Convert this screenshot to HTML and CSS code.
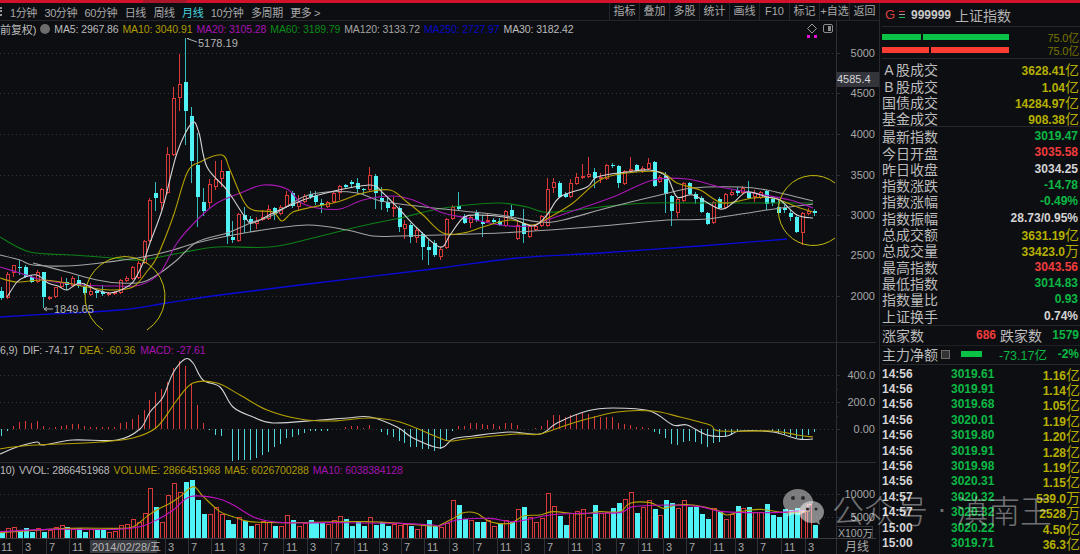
FILE: index.html
```html
<!DOCTYPE html>
<html lang="zh-CN">
<head>
<meta charset="utf-8">
<title>上证指数 月线</title>
<link rel="stylesheet" href="styles.css">
</head>
<body>
<div class="topbar"></div>
<div class="app">
  <main class="left">
    <nav class="toolbar">
      <span class="grip"></span>
      <div class="tabs">
        <span class="tab t1">1分钟</span><span class="tab">30分钟</span><span class="tab">60分钟</span><span class="tab">日线</span><span class="tab">周线</span><span class="tab active">月线</span><span class="tab">10分钟</span><span class="tab">多周期</span><span class="tab">更多 &gt;</span>
      </div>
      <div class="tools">
        <span class="tool">指标</span><span class="tool">叠加</span><span class="tool">多股</span><span class="tool">统计</span><span class="tool">画线</span><span class="tool">F10</span><span class="tool">标记</span><span class="tool">+自选</span><span class="tool">返回</span>
      </div>
    </nav>

    <section class="pane pane-main">
      <svg class="chart" width="879" height="322" viewBox="0 21 879 322">
        <g class="grid">
          <path d="M0 53H836M0 93H836M0 134H836M0 175H836M0 215H836M0 255H836M0 296H836"/>
        </g>
        <path class="axis" d="M836.5 21V343M836 53h4M836 93h4M836 134h4M836 175h4M836 215h4M836 255h4M836 296h4"/>
        <g id="candles"></g>
        <g id="maLines"></g>
        <path class="ring" d="M103 330A40 40 0 1 1 147 330"/>
        <path class="ring" d="M835 183A35 35 0 1 0 835 238"/>
        <path class="pointer" d="M187 38.5h2M187 38.5l10 3.5"/>
        <path class="pointer" d="M44 309h9M44 309l3-2M44 309l3 2"/>
        <text class="lbl" x="198" y="47">5178.19</text>
        <text class="lbl" x="54" y="313">1849.65</text>
        <path class="diamond" d="M812 24l4.500 4.500-4.500 4.500-4.500-4.500z"/>
        <rect class="dot" x="807" y="35" width="3" height="3"/>
        <rect class="dot" x="814" y="35" width="3" height="3"/>
        <rect class="sideicon" x="823.500" y="24.500" width="9" height="8" rx="1.500"/>
        <rect class="sidefill" x="828" y="26" width="3" height="5"/>
        <g class="ylabels">
          <text x="875" y="57">5000</text>
          <text x="875" y="97">4500</text>
          <text x="875" y="138">4000</text>
          <text x="875" y="179">3500</text>
          <text x="875" y="219">3000</text>
          <text x="875" y="259">2500</text>
          <text x="875" y="300">2000</text>
        </g>
        <rect class="pricebox" x="836" y="72" width="43" height="15"/>
        <text class="pricetext" x="837" y="83">4585.4</text>
      </svg>
      <div class="legend legend-main">
        <span class="c-g1 qfq">前复权)</span><span class="roundicon"></span>
        <span class="c-g1">MA5: 2967.86</span><span class="c-ol">MA10: 3040.91</span><span class="c-mg">MA20: 3105.28</span><span class="c-gn">MA60: 3189.79</span><span class="c-g2">MA120: 3133.72</span><span class="c-bl">MA250: 2727.97</span><span class="c-g1">MA30: 3182.42</span>
      </div>
    </section>

    <section class="pane pane-macd">
      <svg class="chart" width="876" height="120" viewBox="0 343 876 120">
        <g class="grid"><path d="M0 375H836M0 402H836M0 429H836"/></g>
        <path class="axis" d="M836.5 343V463M836 375h4M836 389h2M836 402h4M836 416h2M836 429h4"/>
        <g id="macd"></g>
        <g class="ylabels">
          <text x="875" y="379">400.0</text>
          <text x="875" y="406">200.0</text>
          <text x="875" y="433">0.00</text>
        </g>
      </svg>
      <div class="legend legend-macd">
        <span class="c-g1">6,9)</span><span class="c-g1">DIF: -74.17</span><span class="c-ol">DEA: -60.36</span><span class="c-mg">MACD: -27.61</span>
      </div>
    </section>

    <section class="pane pane-vol">
      <svg class="chart" width="876" height="76" viewBox="0 463 876 76">
        <g class="grid"><path d="M0 494H836M0 517H836"/></g>
        <path class="axis" d="M836.5 463V539M836 494h4M836 517h4"/>
        <g id="vol"></g>
        <g class="ylabels">
          <text x="875" y="498">10000</text>
          <text x="875" y="521">5000</text>
        </g>
        <rect class="unitbox" x="836.500" y="526.500" width="36" height="12"/>
        <text class="unit" x="838" y="537">X100万</text>
      </svg>
      <div class="legend legend-vol">
        <span class="c-g1">10)</span><span class="c-g1">VVOL: 2866451968</span><span class="c-ol">VOLUME: 2866451968</span><span class="c-ol">MA5: 6026700288</span><span class="c-mg">MA10: 6038384128</span>
      </div>
    </section>

    <svg class="chart xaxis" width="876" height="15" viewBox="0 539 876 15">
      <path class="axis" d="M836.5 539V554"/>
      <g id="xticks"></g>
      <rect class="datebox" x="90" y="540" width="67" height="13"/>
      <text class="lbl" x="92" y="551">2014/02/28/五</text>
      <text class="month" x="845" y="551">月线</text>
    </svg>
  </main>

  <aside class="panel">
    <header class="phead">
      <span class="g">G</span>
      <span class="menu"><i class="m-r"></i><i class="m-g"></i><i class="m-n"></i></span>
      <b class="code">999999</b>
      <span class="name">上证指数</span>
    </header>
    <div class="meters">
      <div class="meter"><i class="seg green s39"></i><i class="seg green s87"></i><span class="mval">75.0亿</span></div>
      <div class="meter"><i class="seg red s47"></i><i class="seg red s78"></i><span class="mval">75.0亿</span></div>
    </div>
    <div class="sec sec-a">
      <div class="row"><span><i class="wide">A</i>股成交</span><b class="ol">3628.41<em>亿</em></b></div>
      <div class="row"><span><i class="wide">B</i>股成交</span><b class="ol">1.04<em>亿</em></b></div>
      <div class="row"><span>国债成交</span><b class="ol">14284.97<em>亿</em></b></div>
      <div class="row"><span>基金成交</span><b class="ol">908.38<em>亿</em></b></div>
    </div>
    <div class="sec sec-b">
      <div class="row"><span>最新指数</span><b class="gn">3019.47</b></div>
      <div class="row"><span>今日开盘</span><b class="rd">3035.58</b></div>
      <div class="row"><span>昨日收盘</span><b class="wh">3034.25</b></div>
      <div class="row"><span>指数涨跌</span><b class="gn">-14.78</b></div>
      <div class="row"><span>指数涨幅</span><b class="gn">-0.49%</b></div>
      <div class="row"><span>指数振幅</span><b class="wh">28.73/0.95%</b></div>
      <div class="row"><span>总成交额</span><b class="ol">3631.19<em>亿</em></b></div>
      <div class="row"><span>总成交量</span><b class="ol">33423.0<em>万</em></b></div>
      <div class="row"><span>最高指数</span><b class="rd">3043.56</b></div>
      <div class="row"><span>最低指数</span><b class="gn">3014.83</b></div>
      <div class="row"><span>指数量比</span><b class="gn">0.93</b></div>
      <div class="row"><span>上证换手</span><b class="wh">0.74%</b></div>
    </div>
    <div class="updown">
      <span>涨家数</span><b class="rd n686">686</b><span class="lab2">跌家数</span><b class="gn n1579">1579</b>
    </div>
    <div class="flow">
      <span>主力净额</span><span class="docicon"></span><i class="flowbar"></i><span class="gn flowval">-73.17亿</span><span class="gn flowpct">-2%</span>
    </div>
    <div class="ticks">
      <div class="tick"><b class="tm">14:56</b><b class="pr">3019.61</b><b class="ol amt">1.16<em>亿</em></b></div>
      <div class="tick"><b class="tm">14:56</b><b class="pr">3019.91</b><b class="ol amt">1.14<em>亿</em></b></div>
      <div class="tick"><b class="tm">14:56</b><b class="pr">3019.68</b><b class="ol amt">1.05<em>亿</em></b></div>
      <div class="tick"><b class="tm">14:56</b><b class="pr">3020.01</b><b class="ol amt">1.19<em>亿</em></b></div>
      <div class="tick"><b class="tm">14:56</b><b class="pr">3019.80</b><b class="ol amt">1.20<em>亿</em></b></div>
      <div class="tick"><b class="tm">14:56</b><b class="pr">3019.91</b><b class="ol amt">1.28<em>亿</em></b></div>
      <div class="tick"><b class="tm">14:56</b><b class="pr">3019.98</b><b class="ol amt">1.19<em>亿</em></b></div>
      <div class="tick"><b class="tm">14:56</b><b class="pr">3020.31</b><b class="ol amt">1.15<em>亿</em></b></div>
      <div class="tick"><b class="tm">14:57</b><b class="pr">3020.32</b><b class="ol amt">539.0<em>万</em></b></div>
      <div class="tick"><b class="tm">14:57</b><b class="pr">3020.32</b><b class="ol amt">2528<em>万</em></b></div>
      <div class="tick"><b class="tm">15:00</b><b class="pr">3020.22</b><b class="ol amt">4.50<em>亿</em></b></div>
      <div class="tick"><b class="tm">15:00</b><b class="pr">3019.71</b><b class="ol amt">36.3<em>亿</em></b></div>
    </div>
  </aside>
</div>

<div class="watermark">
  <svg class="wechat" width="44" height="44" viewBox="0 0 44 44">
    <path class="bub1" d="M17 2C8.700 2 2 7.800 2 15c0 4 2.100 7.600 5.400 10L6 30l5.200-2.900c1.800.600 3.800.900 5.800.900 1 0 1.700-.100 2.500-.200C22 27 34 17 32 13 30 6.800 24.200 2 17 2z"/>
    <circle class="eye" cx="12" cy="11" r="2"/><circle class="eye" cx="22" cy="11" r="2"/>
    <path class="bub2" d="M31 14c-7 0-13 5-13 11s6 11 13 11c1.500 0 3-.200 4.300-.600L39 38l-.900-4.200C41 31.800 43 28.600 43 25c0-6-5.500-11-12-11z"/>
    <circle class="eye" cx="26.500" cy="22" r="1.600"/><circle class="eye" cx="35" cy="22" r="1.600"/>
  </svg>
  <span class="wmtext">公众号</span><span class="wmdot">·</span><span class="wmtext wmname">滇南王</span>
</div>
<script src="chart.js"></script>
</body>
</html>
```
FILE: styles.css
```css
* { box-sizing: border-box; }
html, body { margin: 0; padding: 0; }
body {
  width: 1080px; height: 554px; overflow: hidden; position: relative;
  background: #0d0e12; color: #b4b4b4;
  font-family: "Liberation Sans", "Noto Sans CJK SC", sans-serif;
}
.topbar { height: 3px; background: linear-gradient(90deg, #d2122a 143px, #a9162a 143px, #a9162a 187px, #d2122a 187px); }
.app { display: flex; height: 551px; }
.left { width: 880px; flex: none; display: flex; flex-direction: column; border-right: 1px solid #26282d; }

.toolbar { height: 18px; display: flex; align-items: center; border-bottom: 1px solid #24262b; font-size: 11px; color: #a8a8a8; }
.grip { width: 2px; height: 9px; margin-right: 8px; border-left: 2px dotted #999; }
.tabs { display: flex; gap: 7.500px; letter-spacing: -.4px; }
.tab { white-space: nowrap; }
.active { color: #45d4de; }
.tools { margin-left: auto; display: flex; width: 270px; }
.tool { width: 30px; height: 17px; line-height: 17px; text-align: center; border-left: 1px solid #24262b; white-space: nowrap; }

.pane { position: relative; flex: none; }
.pane-main { height: 322px; }
.pane-macd { height: 120px; }
.pane-vol { height: 76px; }
.chart { display: block; }
.xaxis { flex: none; }
.pane::after { content: ""; position: absolute; left: 0; width: 876px; bottom: 0; height: 1px; background: #2a2c32; }
.pane-vol::after { background: #3a3c42; }

.grid path { fill: none; stroke: #34353b; stroke-width: 1; stroke-dasharray: 1 3; shape-rendering: crispEdges; }
.axis { fill: none; stroke: #2e3036; stroke-width: 1; shape-rendering: crispEdges; }
.ring { fill: none; stroke: #c4bc0a; stroke-width: 1; }
.pointer { fill: none; stroke: #b0b0b0; stroke-width: 1; }
.lbl { font-size: 11px; fill: #b4b4b4; font-family: "Liberation Sans", "Noto Sans CJK SC", sans-serif; }
.ylabels text { font-size: 11px; fill: #a6a6a6; text-anchor: end; font-family: "Liberation Sans", sans-serif; }
.pricebox { fill: #34353c; }
.pricetext { font-size: 11px; fill: #d6d6d6; font-family: "Liberation Sans", sans-serif; }
.diamond { fill: none; stroke: #9a9a9a; }
.dot { fill: #e010d8; }
.sideicon { fill: none; stroke: #8c8c8c; }
.sidefill { fill: #8c8c8c; }
.unitbox { fill: none; stroke: #33353a; }
.unit { font-size: 10.500px; fill: #a6a6a6; font-family: "Liberation Sans", "Noto Sans CJK SC", sans-serif; }
.datebox { fill: #3a3b41; }
.month { font-size: 12px; fill: #a6a6a6; font-family: "Noto Sans CJK SC", sans-serif; }
.xt { font-size: 11px; fill: #a6a6a6; font-family: "Liberation Sans", sans-serif; }
.xl { stroke: #303238; stroke-width: 1; shape-rendering: crispEdges; }

.up { fill: #0d0e12; stroke: #d83a3a; stroke-width: 1; shape-rendering: crispEdges; }
.dn { fill: #4ff3f6; shape-rendering: crispEdges; }
.wr { stroke: #d83a3a; stroke-width: 1; fill: none; shape-rendering: crispEdges; }
.wc { stroke: #37b9c0; stroke-width: 1; fill: none; shape-rendering: crispEdges; }
.hc { stroke: #52d6de; stroke-width: 1; fill: none; shape-rendering: crispEdges; }
.ma { fill: none; stroke-width: 1.100; stroke-linejoin: round; }
.s-w { stroke: #d4d4d4; }
.s-g { stroke: #a4a4a4; }
.s-o { stroke: #b5a000; }
.s-m { stroke: #a818b4; }
.s-v { stroke: #0d7f18; }
.s-b { stroke: #0a0ad8; stroke-width: 1.300; }
.s-mv { stroke: #c010c0; }

.legend { position: absolute; left: 0; display: flex; gap: 4px; font-size: 10.500px; white-space: nowrap; letter-spacing: -.1px; align-items: center; }
.legend-main { top: 1px; height: 14px; }
.legend-macd { top: 0; height: 13px; gap: 5px; }
.legend-vol { top: 0; height: 13px; }
.qfq { font-size: 11px; }
.roundicon { width: 10px; height: 10px; border-radius: 50%; background: #6c6c6c; margin-right: 0; flex: none; }
.c-g1 { color: #bcbcbc; }
.c-g2 { color: #a4a4a4; }
.c-ol { color: #ad9a00; }
.c-mg { color: #a412b0; }
.c-gn { color: #0a8a16; }
.c-bl { color: #0808c4; }

.panel { flex: 1; min-width: 0; font-size: 14px; color: #bcbcbc; padding-left: 2px; }
.phead { height: 24px; display: flex; align-items: center; padding-left: 3px; border-bottom: 1px solid #26282d; }
.g { color: #d8403e; font-size: 13px; width: 14px; }
.menu { width: 12px; display: flex; flex-direction: column; gap: 2px; }
.menu i { display: block; width: 6px; height: 1px; }
.m-r { background: #d83a3a; }
.m-g { background: #a0a0a0; }
.m-n { background: #18c050; }
.code { font-size: 12px; color: #c8c8c8; width: 44px; }
.name { font-size: 14px; color: #b4b4b4; }
.meters { height: 32px; border-bottom: 1px solid #26282d; padding-top: 6px; display: flex; flex-direction: column; gap: 6px; }
.meter { display: flex; height: 7px; align-items: center; gap: 2px; position: relative; }
.seg { display: block; height: 6px; }
.green { background: #0ac246; }
.red { background: #fa3c32; }
.s39 { width: 39px; }
.s87 { width: 86px; }
.s47 { width: 47px; }
.s78 { width: 78px; }
.mval { margin-left: auto; font-size: 11px; color: #7a7600; padding-right: 1px; text-align: right; white-space: nowrap; letter-spacing: -.2px; }
.sec { border-bottom: 1px solid #26282d; }
.sec-a { height: 68px; padding-top: 2px; }
.sec-b { height: 199px; padding-top: 1px; }
.row { height: 16.330px; display: flex; justify-content: space-between; align-items: center; padding-right: 2px; white-space: nowrap; }
.wide { display: inline-block; width: 14px; text-align: center; font-style: normal; }
b { font-weight: bold; font-size: 12px; }
em { font-style: normal; font-weight: normal; font-size: 14px; letter-spacing: -1px; }
.ol { color: #b5b000; }
.gn { color: #0bb844; }
.rd { color: #f03c3c; }
.wh { color: #d4d4d4; }
.updown { height: 20px; display: flex; align-items: center; border-bottom: 1px solid #1e2024; padding-bottom: 2px; }
.n686 { width: 36px; margin-left: 36px; text-align: right; }
.lab2 { margin-left: 4px; }
.n1579 { margin-left: auto; padding-right: 1px; }
.flow { height: 19px; display: flex; align-items: center; border-bottom: 1px solid #26282d; white-space: nowrap; padding-bottom: 2px; }
.docicon { width: 9px; height: 9px; border: 1px solid #6c6c6c; background: #333; margin-left: 3px; flex: none; }
.flowbar { width: 21px; height: 6px; background: #0ac246; margin-left: 11px; flex: none; }
.flowval { margin-left: 17px; font-size: 12.500px; }
.flowpct { margin-left: auto; font-size: 12px; font-weight: bold; padding-right: 1px; }
.ticks { padding-top: 1px; }
.tick { height: 15.400px; display: flex; align-items: center; }
.tm { width: 69px; color: #d4d4d4; }
.pr { width: 44px; color: #0bb844; }
.amt { margin-left: auto; padding-right: 1px; white-space: nowrap; }

.watermark { position: absolute; left: 781px; top: 486px; display: flex; align-items: center; pointer-events: none; }
.wechat { flex: none; margin-right: 7px; }
.bub1 { fill: rgba(255,255,255,.46); }
.bub2 { fill: rgba(255,255,255,.5); }
.eye { fill: #2a2a2a; }
.wmtext { font-size: 32px; font-weight: 300; color: rgba(255,255,255,.42); font-family: "Noto Sans CJK SC", sans-serif; white-space: nowrap; }
.wmdot { width: 28px; text-align: center; font-size: 28px; color: rgba(255,255,255,.42); font-family: "Liberation Sans", sans-serif; }
```
FILE: chart.js
```js
(function () {
  var NS = 'http://www.w3.org/2000/svg';
  function X(i) { return Math.round(2.2 + 5.93 * i) - 2; }

  // kind, body top, body bottom, wick high, wick low
  var candles = [
    ['c',291,298,287,300],['r',274,298,272,299],['r',265,273,265,277],['c',267,268,260,275],['c',267,277,265,278],
    ['c',277,282,275,283],['r',272,282,270,283],['c',272,297,272,308],['r',297,299,296,300],['r',287,297,287,298],
    ['r',282,287,277,288],['c',282,285,278,290],['r',278,286,276,287],['c',280,286,276,288],['c',287,293,283,295],
    ['r',291,295,283,296],['c',291,293,290,298],['c',292,294,285,296],['r',293,295,292,296],['r',292,294,291,295],
    ['r',280,293,279,294],['r',278,281,276,282],['r',267,279,266,280],['r',263,278,261,279],['r',241,263,240,264],
    ['r',200,241,198,242],['c',193,198,182,211],['r',189,203,188,210],['r',154,193,147,194],['r',98,155,87,156],
    ['r',84,98,54,111],['c',82,111,38,145],['c',116,161,107,183],['c',165,197,133,227],['c',202,211,188,216],
    ['r',184,203,179,208],['r',179,187,161,190],['r',171,179,160,187],['c',171,236,171,244],['c',237,240,221,243],
    ['r',214,241,213,242],['c',215,220,207,233],['c',219,222,216,232],['r',221,224,217,229],['r',217,220,210,221],
    ['r',209,219,205,220],['c',208,214,207,220],['r',207,214,205,215],['r',195,207,191,208],['c',193,206,191,208],
    ['r',202,207,195,211],['r',196,202,194,203],['c',194,197,191,199],['c',196,202,191,205],['c',203,205,199,213],
    ['r',202,207,201,208],['r',193,202,192,203],['r',186,193,185,200],['c',185,187,184,188],['c',182,184,180,187],
    ['c',183,189,178,193],['c',189,190,188,195],['r',175,190,167,191],['c',176,193,174,209],['c',198,202,187,210],
    ['c',202,208,198,212],['r',207,209,197,217],['c',208,227,206,232],['r',224,229,220,239],['c',225,237,223,243],
    ['r',230,238,227,243],['c',234,247,232,260],['c',247,250,240,265],['c',243,255,240,257],['r',249,257,247,260],
    ['r',219,248,218,249],['r',207,219,205,220],['c',206,209,192,210],['c',216,223,214,224],['r',217,223,216,228],
    ['c',213,220,210,222],['c',222,224,215,237],['r',220,222,214,223],['c',220,222,218,224],['c',221,225,218,226],
    ['r',211,226,210,227],['c',210,216,205,218],['r',225,239,220,240],['c',223,234,209,243],['r',226,237,225,238],
    ['r',226,230,225,231],['r',216,226,215,227],['r',189,226,178,227],['r',182,188,178,193],['c',183,197,181,198],
    ['c',194,197,192,198],['r',183,197,179,198],['r',177,184,173,185],['r',176,177,164,179],['r',174,177,157,178],
    ['c',172,178,168,188],['r',177,178,173,183],['r',165,179,164,180],['c',165,166,163,168],['c',166,183,165,188],
    ['r',171,184,170,185],['r',169,171,157,172],['c',165,171,164,172],['r',168,172,166,173],['r',163,169,158,170],
    ['c',162,186,161,187],['r',177,182,175,183],['c',176,194,172,213],['c',196,211,195,226],['r',199,213,198,218],
    ['r',183,201,182,202],['c',183,194,182,195],['c',194,199,192,204],['c',198,212,196,213],['c',213,224,212,225],
    ['r',202,223,201,224],['c',199,208,197,209],['r',194,208,193,209],['r',192,195,190,196],['c',190,193,187,196],
    ['r',188,193,186,194],['c',192,198,181,199],['r',193,197,190,202],['r',192,198,191,199],['c',191,204,190,210],
    ['c',199,203,197,206],['c',207,213,199,214],['c',208,210,205,213],['c',213,217,210,221],['c',217,232,216,233],
    ['r',213,233,212,245],['r',211,214,208,215],['c',211,213,209,216]
  ];

  // y3 = (y - 340) * 3 readings of the MACD histogram tops/bottoms
  var macd = [288,272,258,245,244,250,244,258,265,262,258,255,252,252,257,260,261,262,262,262,250,246,236,225,210,180,157,148,125,85,62,77,130,195,250,270,285,288,268,362,360,360,360,355,345,335,322,312,295,290,285,278,272,274,272,272,268,266,260,257,258,264,255,268,276,284,292,303,310,322,320,326,328,332,326,300,272,258,258,250,250,252,254,252,258,250,250,255,266,266,263,258,240,224,224,230,225,222,218,222,228,232,232,232,250,252,255,260,262,263,276,282,293,312,314,305,303,305,312,322,310,305,290,285,276,268,267,267,267,268,274,280,284,288,295,300,284,275];

  var volR = '1,2,6,8,9,10,12,15,18,19,20,21,22,23,24,25,27,28,29,30,35,36,37,40,43,44,45,47,48,50,51,55,56,57,62,66,67,68,70,71,74,75,76,79,82,83,85,87,89,90,91,92,93,96,97,98,99,101,102,105,106,108,109,111,114,115,120,122,123,125,127,128,135,136'.split(',').reduce(function (m, v) { m[+v] = 1; return m; }, {});
  var vol = [575,565,560,570,565,575,565,575,570,562,555,560,565,565,575,568,568,568,575,572,555,552,538,545,518,445,502,547,465,428,455,425,420,480,523,523,500,523,540,553,530,543,557,552,543,545,557,557,525,540,558,548,540,545,548,552,540,528,538,558,545,557,530,555,547,558,553,555,553,558,568,555,540,558,560,550,480,495,537,540,546,546,540,558,553,540,545,508,502,532,546,535,460,498,528,555,520,512,508,530,495,520,515,505,490,478,455,520,500,480,508,525,480,490,505,480,500,502,522,538,503,515,538,522,498,505,500,515,515,493,525,530,508,510,503,515,492,555];

  var lines = {
    w: [[7,297],[17,282],[25,277],[37,275],[48,283],[58,286],[67,290],[80,283],[97,290],[110,293],[123,289],[133,282],[143,263],[150,243],[163,207],[177,153],[192,123],[199,133],[207,167],[227,190],[245,217],[253,223],[273,213],[303,200],[330,192],[370,185],[383,193],[400,210],[417,228],[440,247],[450,235],[463,218],[477,215],[510,218],[533,226],[547,215],[560,197],[587,187],[597,177],[627,172],[650,170],[667,177],[677,197],[693,195],[720,209],[733,203],[747,192],[767,197],[780,200],[797,215],[813,218]],
    o: [[0,278],[17,282],[43,280],[67,283],[87,287],[110,290],[133,287],[148,270],[157,257],[173,217],[187,173],[200,162],[222,155],[230,170],[243,200],[253,210],[273,212],[282,221],[293,212],[313,207],[337,202],[363,193],[390,190],[407,202],[423,215],[443,233],[463,233],[483,227],[510,220],[533,225],[550,217],[573,203],[600,180],[627,173],[660,172],[677,183],[700,190],[723,203],[753,198],[773,198],[800,208],[813,212]],
    m: [[0,267],[20,273],[43,280],[83,285],[117,286],[140,285],[160,273],[177,243],[197,220],[217,203],[243,192],[263,185],[287,189],[300,202],[317,208],[340,209],[363,200],[393,196],[413,200],[443,213],[467,218],[500,225],[530,226],[547,220],[570,212],[613,197],[653,180],[687,179],[720,187],[753,193],[790,200],[813,208]],
    v: [[0,237],[30,252],[73,255],[113,258],[140,260],[180,253],[217,247],[270,247],[313,238],[357,227],[400,218],[433,210],[467,205],[500,203],[527,207],[543,212],[567,211],[600,207],[647,203],[700,203],[750,203],[813,203]],
    g: [[0,255],[20,260],[33,265],[67,266],[100,263],[143,257],[173,250],[200,242],[250,232],[307,225],[347,230],[373,236],[400,236],[440,235],[500,233],[550,230],[613,225],[667,220],[707,219],[767,210],[813,204]],
    g2: [[33,263],[67,272],[97,280],[120,283],[143,282],[160,273],[177,260],[197,242],[227,233],[253,222],[273,215],[303,197],[327,192],[357,193],[377,200],[400,204],[443,209],[500,215],[540,222],[563,220],[607,208],[660,195],[693,188],[740,187],[767,190],[813,201]],
    b: [[0,317],[50,314],[120,310],[167,303],[220,295],[300,285],[433,269],[517,258],[600,253],[700,246],[787,239]]
  };
  var dif = [[0,454],[17,447],[37,442],[43,445],[73,440],[117,440],[140,429],[150,412],[163,397],[173,373],[185,359],[193,363],[203,380],[220,387],[233,407],[253,417],[273,423],[320,420],[347,418],[370,417],[397,427],[413,438],[440,448],[453,439],[473,436],[510,432],[540,434],[557,423],[587,411],[613,408],[650,411],[673,425],[687,425],[707,435],[727,436],[740,431],[773,432],[798,439],[813,439]];
  var dea = [[0,449],[13,447],[37,445],[100,442],[133,438],[157,427],[177,400],[193,383],[217,383],[240,395],[267,410],[300,419],[333,421],[370,418],[400,422],[437,437],[450,441],[473,438],[517,434],[540,434],[573,423],[617,412],[653,411],[680,417],[710,425],[720,431],[773,431],[797,435],[813,437]];

  function v3(pts, off) { return pts.map(function (p) { return [p[0] / 3 + off, 340 + p[1] / 3]; }); }
  var volMa5 = v3([[0,578],[200,565],[350,565],[400,560],[440,530],[470,510],[510,490],[540,470],[580,440],[610,470],[660,515],[700,530],[750,545],[850,548],[1100,545],[1300,558]], 0)
    .concat(v3([[0,555],[40,535],[70,518],[110,520],[150,545],[210,550],[250,528],[300,525],[340,515],[420,522],[480,515],[540,515],[570,490],[630,488],[670,505],[710,495],[760,495],[830,510],[860,525],[900,515],[960,508],[1040,518],[1110,512]], 440));
  var volMa10 = v3([[0,575],[150,568],[350,568],[420,560],[470,540],[520,510],[570,470],[650,475],[700,495],[770,535],[850,548],[1000,548],[1200,550],[1300,555]], 0)
    .concat(v3([[0,558],[50,540],[150,535],[220,545],[330,525],[420,520],[540,518],[580,500],[700,495],[780,500],[850,515],[1000,518],[1110,510]], 440));

  function smooth(p) {
    var d = 'M' + p[0][0] + ' ' + p[0][1];
    for (var i = 0; i < p.length - 1; i++) {
      var a = p[i - 1] || p[i], b = p[i], c = p[i + 1], e = p[i + 2] || c;
      d += 'C' + (b[0] + (c[0] - a[0]) / 6).toFixed(1) + ' ' + (b[1] + (c[1] - a[1]) / 6).toFixed(1) + ' ' +
        (c[0] - (e[0] - b[0]) / 6).toFixed(1) + ' ' + (c[1] - (e[1] - b[1]) / 6).toFixed(1) + ' ' + c[0] + ' ' + c[1];
    }
    return d;
  }
  function el(parent, tag, attrs, text) {
    var n = document.createElementNS(NS, tag);
    for (var k in attrs) n.setAttribute(k, attrs[k]);
    if (text) n.textContent = text;
    parent.appendChild(n);
    return n;
  }
  function ma(parent, pts, cls) { el(parent, 'path', { d: smooth(pts), 'class': 'ma ' + cls }); }

  var gc = document.getElementById('candles');
  candles.forEach(function (c, i) {
    var x = X(i), red = c[0] === 'r';
    el(gc, 'path', { d: 'M' + (x + 1.5) + ' ' + c[3] + 'V' + c[4], 'class': red ? 'wr' : 'wc' });
    if (red) el(gc, 'rect', { x: x + 0.5, y: c[1] + 0.5, width: 3, height: Math.max(c[2] - c[1] - 1, 1), 'class': 'up' });
    else el(gc, 'rect', { x: x, y: c[1], width: 4, height: Math.max(c[2] - c[1], 1), 'class': 'dn' });
  });

  var gm = document.getElementById('maLines');
  ma(gm, lines.b, 's-b'); ma(gm, lines.v, 's-v'); ma(gm, lines.g, 's-g'); ma(gm, lines.g2, 's-g');
  ma(gm, lines.m, 's-m'); ma(gm, lines.o, 's-o'); ma(gm, lines.w, 's-w');

  var gd = document.getElementById('macd');
  var zero = 429;
  macd.forEach(function (t, i) {
    var y = 340 + t / 3, red = y < zero;
    if (Math.abs(y - zero) < 0.6) return;
    el(gd, 'path', { d: 'M' + (X(i) + 1.5) + ' ' + zero + 'V' + y.toFixed(1), 'class': red ? 'wr' : 'hc' });
  });
  ma(gd, dif, 's-w'); ma(gd, dea, 's-o');

  var gv = document.getElementById('vol');
  vol.forEach(function (t, i) {
    var y = Math.round(340 + t / 3), x = X(i), h = 539 - y;
    if (volR[i]) el(gv, 'rect', { x: x + 0.5, y: y + 0.5, width: 4, height: h, 'class': 'up' });
    else el(gv, 'rect', { x: x, y: y, width: 5, height: h, 'class': 'dn' });
  });
  ma(gv, volMa5, 's-o'); ma(gv, volMa10, 's-mv');

  var gx = document.getElementById('xticks');
  var ticks = [[7,'11'],[28,'3'],[52,'7'],[78,'11'],[171,'3'],[194,'7'],[220,'11'],[242,'3'],[265,'7'],[292,'11'],[313,'3'],[337,'7'],[363,'11'],[385,'3'],[407,'7'],[433,'11'],[455,'3'],[479,'7'],[506,'11'],[527,'3'],[550,'7'],[577,'11'],[598,'3'],[622,'7'],[647,'11'],[669,'3'],[692,'7'],[719,'11'],[741,'3'],[763,'7'],[790,'11'],[811,'3']];
  ticks.forEach(function (t) {
    var w = t[1].length === 2 ? 6 : 3;
    el(gx, 'path', { d: 'M' + (t[0] - w - 3 + 0.5) + ' 539V554', 'class': 'xl' });
    el(gx, 'text', { x: t[0] - w, y: 551, 'class': 'xt' }, t[1]);
  });
})();
```
